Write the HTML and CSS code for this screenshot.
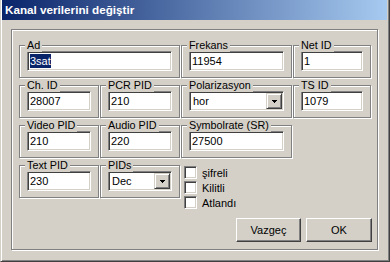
FILE: index.html
```html
<!DOCTYPE html>
<html lang="tr">
<head>
<meta charset="UTF-8">
<title>Kanal verilerini değiştir</title>
<link rel="stylesheet" href="styles.css">
</head>
<body>

<div class="dialog">
    <div class="titlebar">Kanal verilerini değiştir</div>

    <div class="client">
        <div class="panel">
            <div class="grid">
                <div class="group span2">
                    <span class="legend">Ad</span>
                    <div class="edit"><span class="selected">3sat</span></div>
                </div>
                <div class="group">
                    <span class="legend">Frekans</span>
                    <div class="edit">11954</div>
                </div>
                <div class="group">
                    <span class="legend">Net ID</span>
                    <div class="edit">1</div>
                </div>

                <div class="group">
                    <span class="legend">Ch. ID</span>
                    <div class="edit">28007</div>
                </div>
                <div class="group">
                    <span class="legend">PCR PID</span>
                    <div class="edit">210</div>
                </div>
                <div class="group">
                    <span class="legend">Polarizasyon</span>
                    <div class="edit combo">
                        <span class="combo-text">hor</span>
                        <span class="drop">
                            <svg width="5" height="3" viewBox="0 0 5 3" shape-rendering="crispEdges"><path d="M0 0h5v1H0zM1 1h3v1H1zM2 2h1v1H2z" fill="#000"/></svg>
                        </span>
                    </div>
                </div>
                <div class="group">
                    <span class="legend">TS ID</span>
                    <div class="edit">1079</div>
                </div>

                <div class="group">
                    <span class="legend">Video PID</span>
                    <div class="edit">210</div>
                </div>
                <div class="group">
                    <span class="legend">Audio PID</span>
                    <div class="edit">220</div>
                </div>
                <div class="group">
                    <span class="legend">Symbolrate (SR)</span>
                    <div class="edit">27500</div>
                </div>
                <div class="blank"></div>

                <div class="group short">
                    <span class="legend">Text PID</span>
                    <div class="edit">230</div>
                </div>
                <div class="group short">
                    <span class="legend">PIDs</span>
                    <div class="edit combo">
                        <span class="combo-text">Dec</span>
                        <span class="drop">
                            <svg width="5" height="3" viewBox="0 0 5 3" shape-rendering="crispEdges"><path d="M0 0h5v1H0zM1 1h3v1H1zM2 2h1v1H2z" fill="#000"/></svg>
                        </span>
                    </div>
                </div>
                <div class="checks">
                    <label class="check"><span class="box"></span>şifreli</label>
                    <label class="check"><span class="box"></span>Kilitli</label>
                    <label class="check"><span class="box"></span>Atlandı</label>
                </div>

                <div class="buttons">
                    <button class="btn cancel">Vazgeç</button>
                    <button class="btn ok">OK</button>
                </div>
            </div>
        </div>
    </div>
</div>

</body>
</html>
```

FILE: styles.css
```css
* {
    box-sizing: border-box;
}

body {
    margin: 0;
    padding: 0;
    font-family: "Liberation Sans", Arial, sans-serif;
    font-size: 11px;
    color: #000;
    background: #D4D0C8;
}

.dialog {
    width: 390px;
    height: 262px;
    background: #D4D0C8;
    border-left: 1px solid #D4D0C8;
    border-right: 1px solid #404040;
    border-bottom: 1px solid #404040;
    box-shadow: inset 1px 0 #fff, inset -1px -1px #808080;
    padding: 0 2px 0 1px;
}

.titlebar {
    height: 20px;
    padding-left: 3px;
    background: linear-gradient(to right, #0A246A, #A6CAF0);
    color: #fff;
    font-size: 11.7px;
    font-weight: bold;
    line-height: 20px;
}

.client {
    padding: 9px 0 0 9px;
}

/* etched frame around everything */
.panel {
    width: 367px;
    height: 221px;
    border: 1px solid #808080;
    box-shadow: 1px 1px #fff, inset 1px 1px #fff;
    padding: 15px 0 0 7px;
}

.grid {
    display: grid;
    grid-template-columns: 80px 80px 111px 78px;
    grid-template-rows: 33px 33px 33px auto auto;
    column-gap: 1px;
    row-gap: 7px;
}

.group {
    position: relative;
    border: 1px solid #808080;
    box-shadow: 1px 1px #fff, inset 1px 1px #fff;
    padding: 5px 7px 0 7px;
}

.group.span2 {
    grid-column: span 2;
}

.group.short {
    height: 33px;
}

.legend {
    position: absolute;
    top: -7px;
    left: 5px;
    padding: 0 2px;
    background: #D4D0C8;
    font-size: 10.8px;
    line-height: 13px;
    white-space: nowrap;
}

.edit {
    height: 20px;
    background: #fff;
    border: 1px solid;
    border-color: #808080 #fff #fff #808080;
    box-shadow: inset 1px 1px #404040, inset -1px -1px #D4D0C8;
    padding: 0 2px;
    line-height: 18px;
    white-space: nowrap;
    overflow: hidden;
}

.selected {
    background: #0A246A;
    color: #fff;
    padding: 1px 0;
}

.combo {
    display: flex;
    align-items: center;
    padding: 1px 1px 1px 3px;
}

.combo-text {
    flex: 1;
}

.drop {
    width: 16px;
    height: 16px;
    display: flex;
    align-items: center;
    justify-content: center;
    background: #D4D0C8;
    border: 1px solid;
    border-color: #D4D0C8 #404040 #404040 #D4D0C8;
    box-shadow: inset 1px 1px #fff, inset -1px -1px #808080;
}

.drop svg {
    display: block;
    margin-top: 1px;
}

.checks {
    display: flex;
    flex-direction: column;
    padding: 0 0 1px 3px;
}

.check {
    display: flex;
    align-items: center;
    gap: 5px;
    height: 15px;
}

.box {
    width: 13px;
    height: 13px;
    background: #fff;
    border: 1px solid;
    border-color: #808080 #fff #fff #808080;
    box-shadow: inset 1px 1px #404040, inset -1px -1px #D4D0C8;
}

.buttons {
    grid-column: 3 / 5;
    justify-self: end;
    display: flex;
    gap: 5px;
    margin-right: -1px;
}

.btn {
    height: 24px;
    padding: 0;
    font-family: inherit;
    font-size: 11px;
    color: #000;
    background: #D4D0C8;
    border: 1px solid;
    border-color: #fff #404040 #404040 #fff;
    box-shadow: inset -1px -1px #808080;
}

.btn.cancel {
    width: 65px;
}

.btn.ok {
    width: 66px;
}
```
